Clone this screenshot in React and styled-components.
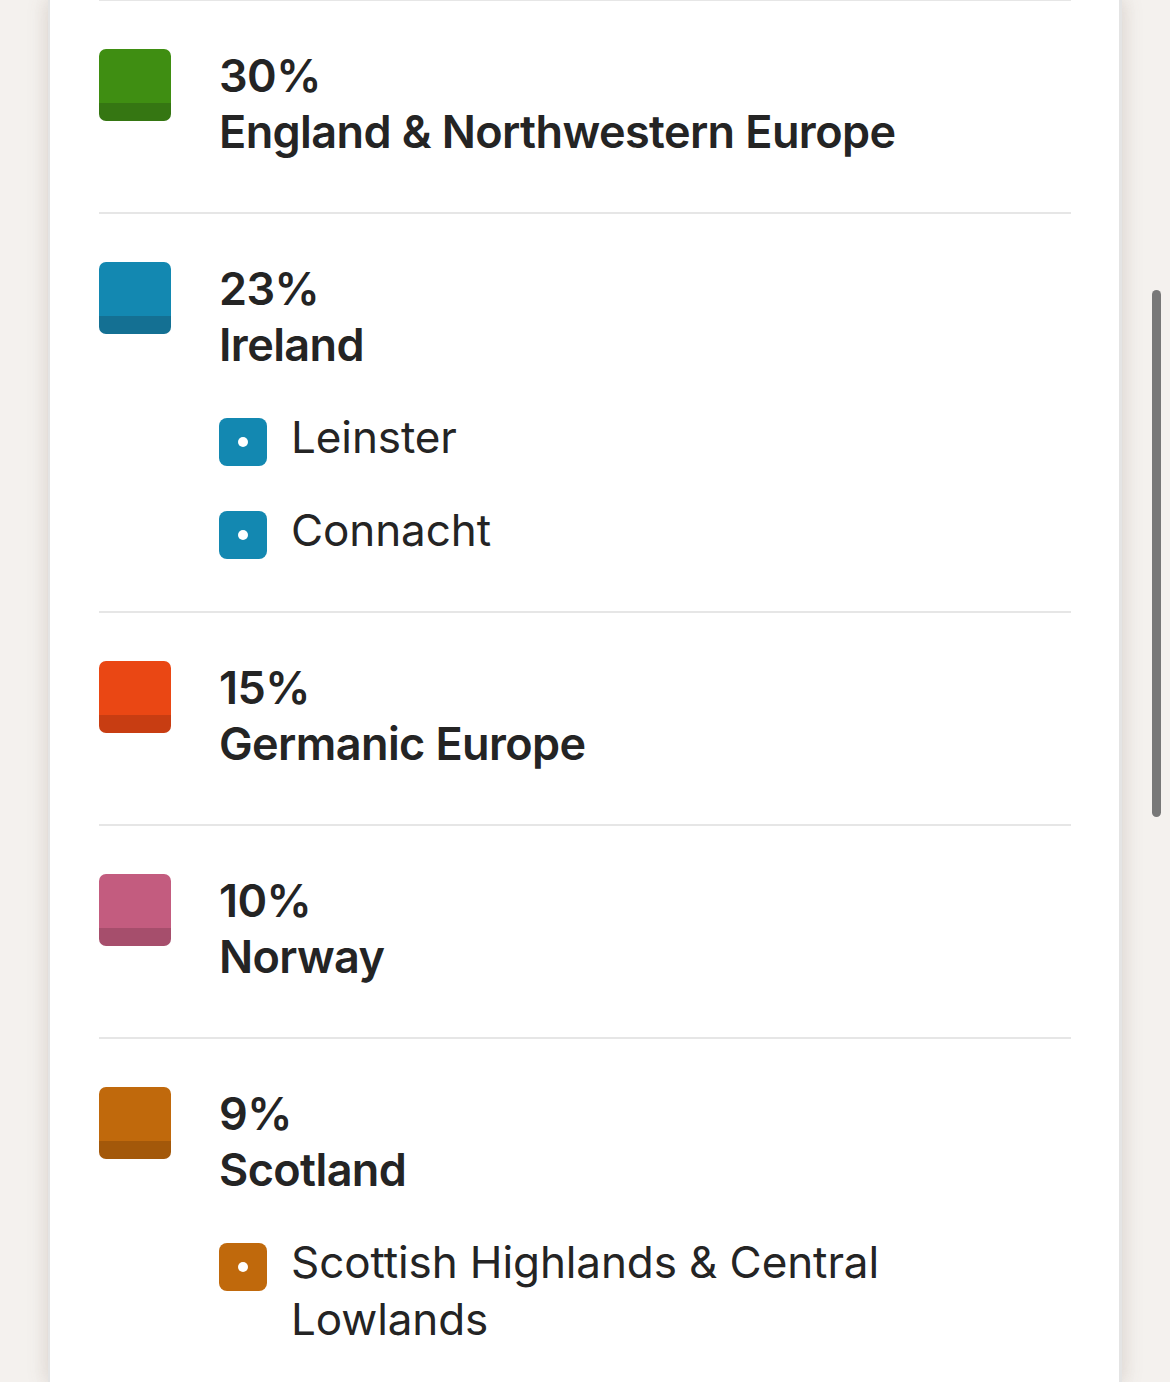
import styled, { createGlobalStyle } from 'styled-components';

const GlobalStyle = createGlobalStyle`
  html, body {
    margin: 0;
    height: 100%;
    overflow: hidden;
    background: #f4f1ee;
  }
  body {
    font-family: Inter, "Noto Sans", "Liberation Sans", sans-serif;
    color: #242424;
  }
`;

const regions = [
  { pct: 30, name: 'England & Northwestern Europe', color: '#3f8e12', shade: '#357612' },
  { pct: 23, name: 'Ireland', color: '#1388b1', shade: '#147093', subs: ['Leinster', 'Connacht'] },
  { pct: 15, name: 'Germanic Europe', color: '#ea4714', shade: '#c83d12' },
  { pct: 10, name: 'Norway', color: '#c35c7f', shade: '#a64e6c' },
  { pct: 9, name: 'Scotland', color: '#c0690c', shade: '#a3580a', subs: ['Scottish Highlands & Central Lowlands'] },
];

function Region({ region }) {
  return (
    <Row>
      <Swatch $color={region.color} $shade={region.shade} />
      <Body>
        <Percent>{region.pct}%</Percent>
        <Name>{region.name}</Name>
        {region.subs && (
          <SubList>
            {region.subs.map((s) => (
              <SubItem key={s}>
                <SubIcon $color={region.color} />
                <SubName>{s}</SubName>
              </SubItem>
            ))}
          </SubList>
        )}
      </Body>
    </Row>
  );
}

export default function App() {
  return (
    <>
      <GlobalStyle />
      <Page>
        <Card>
          <List>
            {regions.map((r) => (
              <Region key={r.name} region={r} />
            ))}
          </List>
        </Card>
      </Page>
      <ScrollThumb />
    </>
  );
}

const Page = styled.div`
  height: 100vh;
  display: flex;
  padding-left: 48px;
`;

const Card = styled.div`
  width: 1074px;
  flex: none;
  background: #ffffff;
  border-left: 2px solid #e4e4e4;
  border-right: 3px solid #e4e4e4;
  box-shadow: -4px 0 18px rgba(120, 100, 80, 0.12), 4px 0 18px rgba(120, 100, 80, 0.12);
  padding: 0 48px 0 49px;
  box-sizing: border-box;
`;

const List = styled.div`
  border-top: 1px solid #e6e6e6;
`;

const Row = styled.div`
  display: flex;
  align-items: flex-start;
  padding: 47px 0 52px;
  border-bottom: 2px solid #e6e6e6;
`;

const Swatch = styled.div`
  flex: none;
  width: 72px;
  height: 72px;
  margin-top: 1px;
  border-radius: 7px;
  background: linear-gradient(to bottom, ${(p) => p.$color} 0 54px, ${(p) => p.$shade} 54px 100%);
`;

const Body = styled.div`
  margin-left: 48px;
  display: flex;
  flex-direction: column;
`;

const Percent = styled.div`
  font-size: 45px;
  line-height: 56px;
  font-weight: 600;
  letter-spacing: -0.6px;
`;

const Name = styled(Percent)``;

const SubList = styled.div`
  margin-top: 36px;
  display: flex;
  flex-direction: column;
  gap: 36px;
`;

const SubItem = styled.div`
  display: flex;
  align-items: flex-start;
`;

const SubIcon = styled.span`
  flex: none;
  width: 48px;
  height: 48px;
  margin-top: 9px;
  border-radius: 8px;
  background: ${(p) => p.$color};
  display: flex;
  align-items: center;
  justify-content: center;

  &::after {
    content: '';
    width: 10px;
    height: 10px;
    border-radius: 50%;
    background: #ffffff;
  }
`;

const SubName = styled.span`
  margin-left: 24px;
  max-width: 640px;
  font-size: 44px;
  line-height: 57px;
  font-weight: 400;
  letter-spacing: -0.1px;
`;

const ScrollThumb = styled.div`
  position: fixed;
  left: 1152px;
  top: 290px;
  width: 9px;
  height: 527px;
  border-radius: 5px;
  background: #787878;
`;
